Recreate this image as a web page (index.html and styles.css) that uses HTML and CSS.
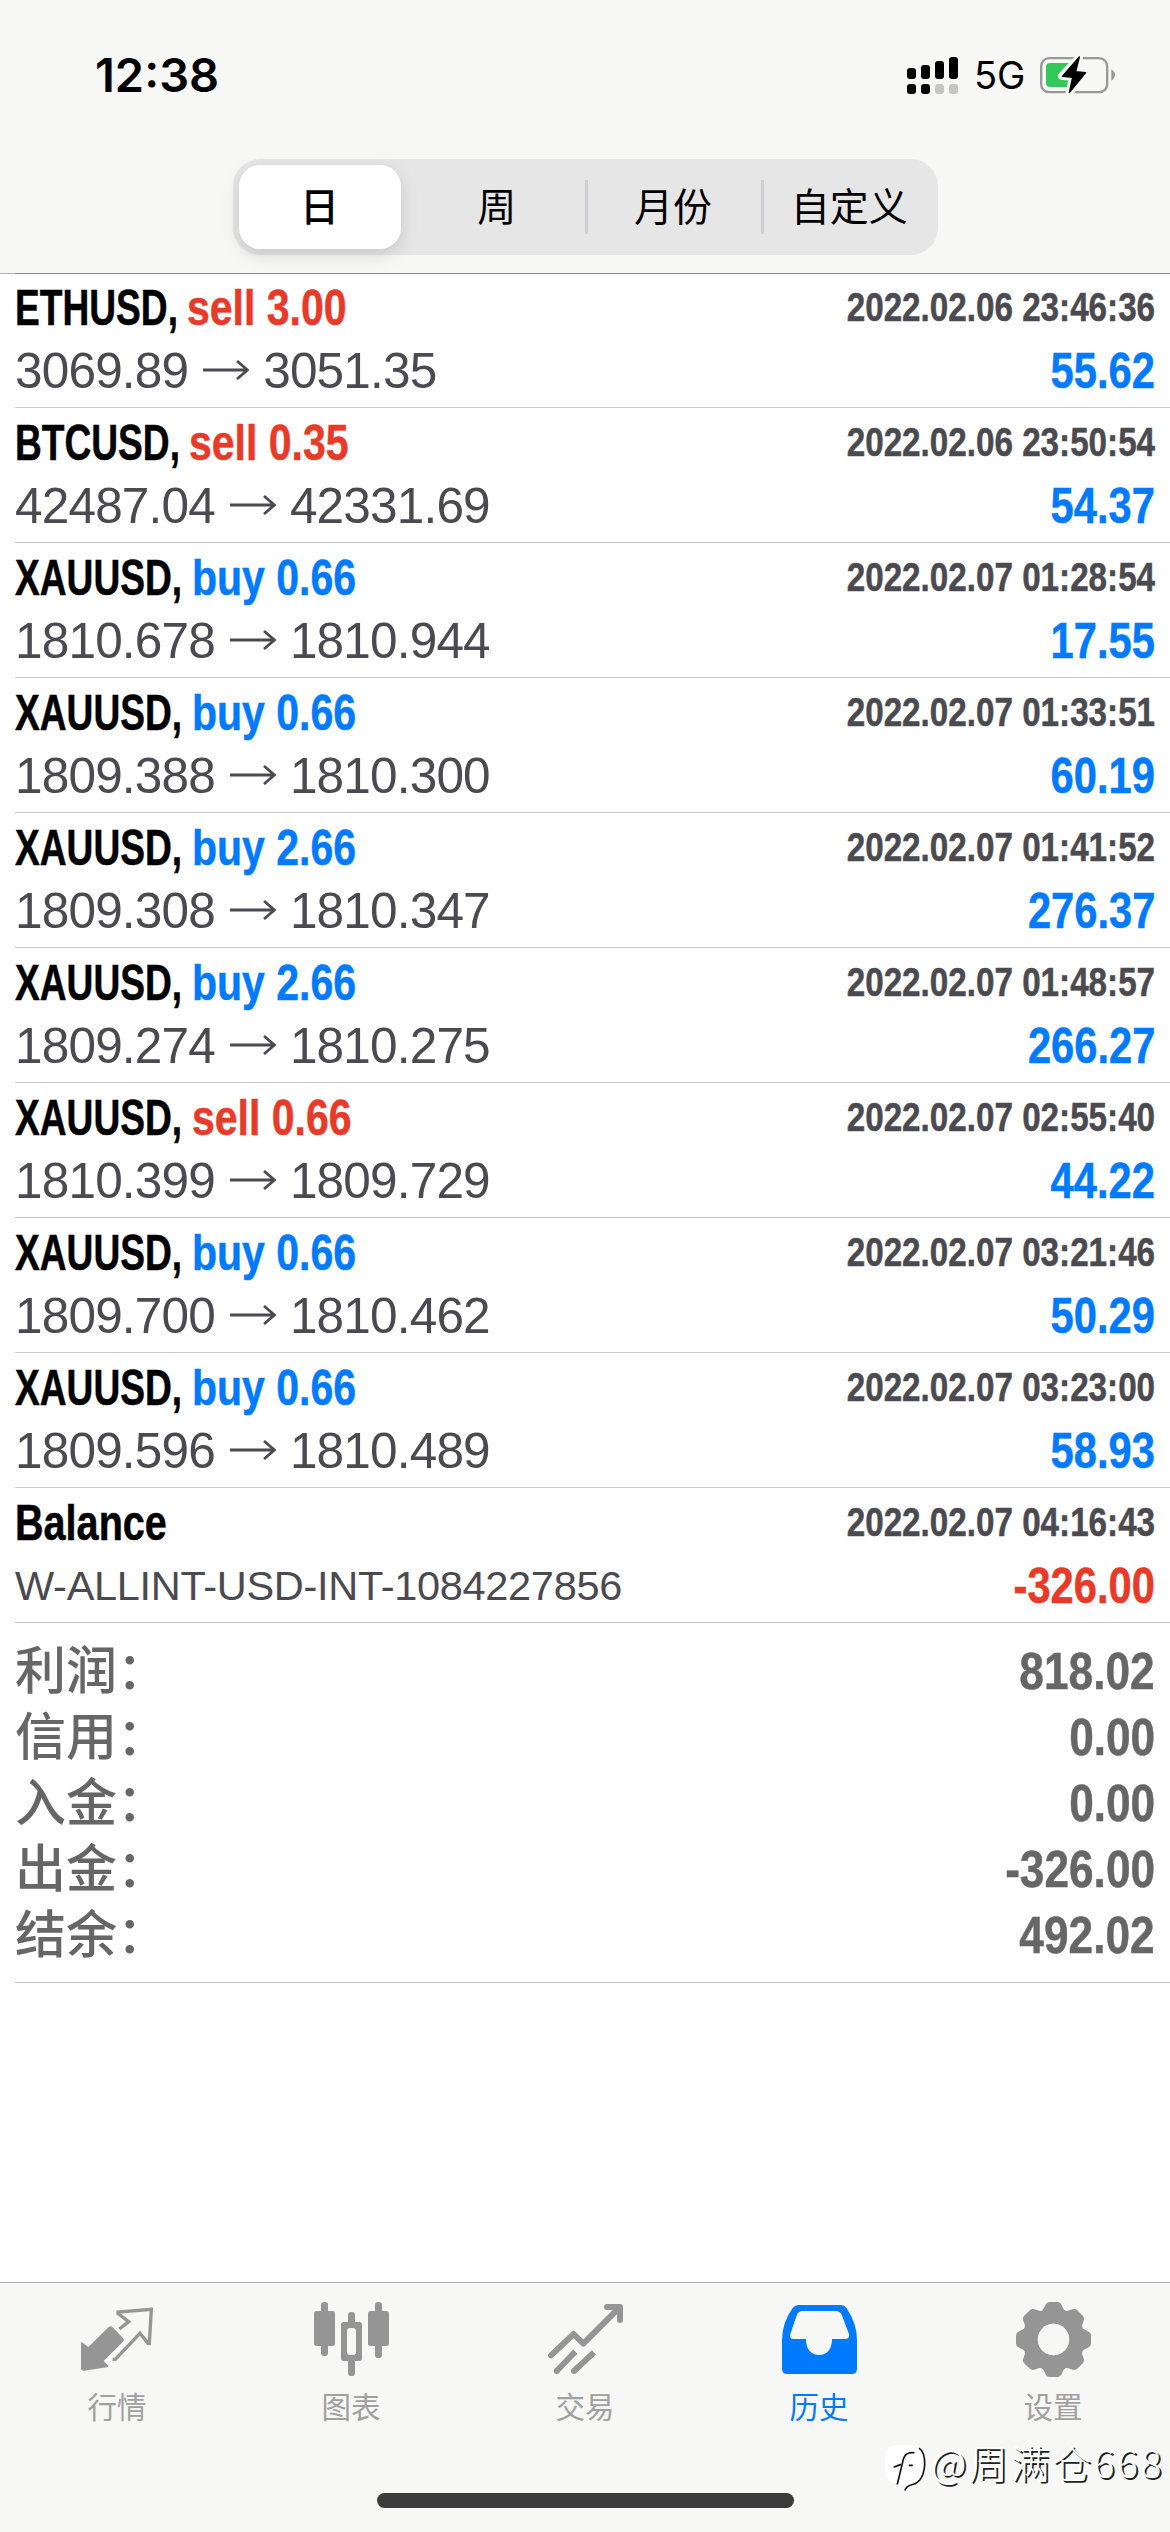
FILE: index.html
```html
<!DOCTYPE html>
<html lang="zh-CN">
<head>
<meta charset="utf-8">
<title>历史</title>
<link rel="stylesheet" href="styles.css">
</head>
<body>
<svg class="defs" width="0" height="0" aria-hidden="true">
  <symbol id="arrow" viewBox="0 0 46 22"><path d="M0 11H44M34 2L44.500 11L34 20" fill="none" stroke="currentColor" stroke-width="2.800"/></symbol>
</svg>
<header class="top">
  <div class="status">
    <span class="time">12:38</span>
    <div class="indicators">
      <svg class="signal" viewBox="0 0 51 37"><g fill="#000"><rect x="0" y="11" width="9" height="11" rx="3"/><rect x="14" y="8" width="9" height="14" rx="3"/><rect x="28" y="4" width="9" height="18" rx="3"/><rect x="42" y="0" width="9" height="22" rx="3"/><rect x="0" y="27" width="9" height="10" rx="3"/><rect x="14" y="27" width="9" height="10" rx="3"/></g><g fill="#c5c5c5"><rect x="28" y="27" width="9" height="10" rx="3"/><rect x="42" y="27" width="9" height="10" rx="3"/></g></svg>
      <span class="net">5G</span>
      <svg class="battery" viewBox="480 75 225 114"><rect x="483.500" y="81.500" width="198" height="102" rx="24" fill="none" stroke="#999" stroke-width="7"/><path d="M694 115Q705 122 705 131Q705 141 694 149Z" fill="#999"/><rect x="498" y="96" width="84" height="72" rx="12" fill="#34c759"/><path d="M598 78L545 135L578 139L568 186L618 125L587 122Z" fill="#f6f6f6" stroke="#f6f6f6" stroke-width="22" stroke-linejoin="round"/><path d="M598 78L547 136L578 139L568 185L617 125L587 122Z" fill="#000" stroke="#000" stroke-width="4" stroke-linejoin="round"/></svg>
    </div>
  </div>
  <div class="segments">
    <span class="segment on">日</span><span class="segment">周</span><span class="segment line">月份</span><span class="segment line">自定义</span>
  </div>
</header>
<main>
  <div class="deal eth"><div class="row"><span class="sym">ETHUSD,</span><span class="side sell">sell 3.00</span><span class="date">2022.02.06 23:46:36</span></div><div class="row"><span class="price">3069.89<svg class="arrow"><use href="#arrow"/></svg>3051.35</span><span class="profit">55.62</span></div></div>
  <div class="deal btc"><div class="row"><span class="sym">BTCUSD,</span><span class="side sell">sell 0.35</span><span class="date">2022.02.06 23:50:54</span></div><div class="row"><span class="price">42487.04<svg class="arrow"><use href="#arrow"/></svg>42331.69</span><span class="profit">54.37</span></div></div>
  <div class="deal"><div class="row"><span class="sym">XAUUSD,</span><span class="side">buy 0.66</span><span class="date">2022.02.07 01:28:54</span></div><div class="row"><span class="price">1810.678<svg class="arrow"><use href="#arrow"/></svg>1810.944</span><span class="profit">17.55</span></div></div>
  <div class="deal"><div class="row"><span class="sym">XAUUSD,</span><span class="side">buy 0.66</span><span class="date">2022.02.07 01:33:51</span></div><div class="row"><span class="price">1809.388<svg class="arrow"><use href="#arrow"/></svg>1810.300</span><span class="profit">60.19</span></div></div>
  <div class="deal"><div class="row"><span class="sym">XAUUSD,</span><span class="side">buy 2.66</span><span class="date">2022.02.07 01:41:52</span></div><div class="row"><span class="price">1809.308<svg class="arrow"><use href="#arrow"/></svg>1810.347</span><span class="profit">276.37</span></div></div>
  <div class="deal"><div class="row"><span class="sym">XAUUSD,</span><span class="side">buy 2.66</span><span class="date">2022.02.07 01:48:57</span></div><div class="row"><span class="price">1809.274<svg class="arrow"><use href="#arrow"/></svg>1810.275</span><span class="profit">266.27</span></div></div>
  <div class="deal"><div class="row"><span class="sym">XAUUSD,</span><span class="side sell">sell 0.66</span><span class="date">2022.02.07 02:55:40</span></div><div class="row"><span class="price">1810.399<svg class="arrow"><use href="#arrow"/></svg>1809.729</span><span class="profit">44.22</span></div></div>
  <div class="deal"><div class="row"><span class="sym">XAUUSD,</span><span class="side">buy 0.66</span><span class="date">2022.02.07 03:21:46</span></div><div class="row"><span class="price">1809.700<svg class="arrow"><use href="#arrow"/></svg>1810.462</span><span class="profit">50.29</span></div></div>
  <div class="deal"><div class="row"><span class="sym">XAUUSD,</span><span class="side">buy 0.66</span><span class="date">2022.02.07 03:23:00</span></div><div class="row"><span class="price">1809.596<svg class="arrow"><use href="#arrow"/></svg>1810.489</span><span class="profit">58.93</span></div></div>
  <div class="deal"><div class="row"><span class="balance">Balance</span><span class="date">2022.02.07 04:16:43</span></div><div class="row"><span class="comment">W-ALLINT-USD-INT-1084227856</span><span class="profit loss">-326.00</span></div></div>
  <div class="summary">
    <div class="total"><span>利润：</span><span class="sum">818.02</span></div>
    <div class="total"><span>信用：</span><span class="sum">0.00</span></div>
    <div class="total"><span>入金：</span><span class="sum">0.00</span></div>
    <div class="total"><span>出金：</span><span class="sum">-326.00</span></div>
    <div class="total"><span>结余：</span><span class="sum">492.02</span></div>
  </div>
</main>
<footer class="bottom">
  <nav class="tabs">
    <div class="tab"><svg class="icon" viewBox="87 96 225 225"><path d="M93 217L112 231L173 171Q178 166 184 171L216 204Q221 210 216 215L158 273L172 287Q173 291 168 292L99 302Q90 302 90 293V218Z" fill="currentColor"/><path d="M205 177L233 155L201 130V126L301 118L295 220H291L267 190L193 268H185" fill="none" stroke="currentColor" stroke-width="10"/></svg><span>行情</span></div>
    <div class="tab"><svg class="icon" viewBox="789 96 225 225"><g fill="currentColor"><rect x="810" y="96" width="21" height="162" rx="10"/><rect x="789" y="123" width="63" height="105" rx="8"/><rect x="891" y="126" width="21" height="45" rx="10"/><rect x="891" y="260" width="21" height="58" rx="10"/><path fill-rule="evenodd" d="M878 156H925Q933 156 933 164V265Q933 273 925 273H878Q870 273 870 265V164Q870 156 878 156ZM898 174Q888 174 888 184V245Q888 255 898 255H905Q915 255 915 245V184Q915 174 905 174Z"/><rect x="972" y="96" width="21" height="168" rx="10"/><rect x="951" y="123" width="63" height="105" rx="8"/></g></svg><span>图表</span></div>
    <div class="tab"><svg class="icon" viewBox="81 96 225 225"><g fill="none" stroke="currentColor" stroke-width="18" stroke-linejoin="round"><path d="M90 256L158 192L187 221L292 116" stroke-linecap="round"/><path d="M258 111H297V150" stroke-linecap="round"/><path d="M163 245L107 303M219 247L159 303"/></g><circle cx="107" cy="303" r="9" fill="currentColor"/><circle cx="159" cy="303" r="9" fill="currentColor"/></svg><span>交易</span></div>
    <div class="tab active"><svg class="icon" viewBox="783 96 225 225"><path fill="currentColor" fill-rule="evenodd" d="M832 105H960Q970 105 976 113Q1008 160 1008 210V296Q1008 312 992 312H799Q783 312 783 296V210Q783 158 815 114Q822 105 832 105ZM846 123Q833 123 828 134L808 192Q804 207 818 207H855C855 240 872 255 894 255C917 255 933 239 933 207H972Q987 207 984 193L962 134Q957 123 944 123Z"/></svg><span>历史</span></div>
    <div class="tab"><svg class="icon" viewBox="-112.500 -112.500 225 225"><defs><path id="tooth" d="M-38 -84Q-29 -90 -26 -100Q-21 -112.500 -12 -112.500H12Q21 -112.500 26 -100Q29 -90 38 -84L30 -50H-30Z"/></defs><g fill="currentColor"><use href="#tooth"/><use href="#tooth" transform="rotate(45)"/><use href="#tooth" transform="rotate(90)"/><use href="#tooth" transform="rotate(135)"/><use href="#tooth" transform="rotate(180)"/><use href="#tooth" transform="rotate(225)"/><use href="#tooth" transform="rotate(270)"/><use href="#tooth" transform="rotate(315)"/></g><circle r="66" fill="none" stroke="currentColor" stroke-width="38"/><circle r="47" fill="#f7f7f6"/></svg><span>设置</span></div>
  </nav>
  <div class="home"></div>
  <div class="mark"><svg class="logo" viewBox="42 525 130 150"><path d="M76 531H132Q168 538 165 585Q162 640 125 652L104 668L108 655L76 646Q46 640 46 610V570Q46 534 76 531Z" fill="#fff"/><path d="M148 540Q166 552 165 590Q161 642 128 650Q110 654 105 668M134 554Q104 549 99 580L82 650M71 598L93 589M117 592H129" fill="none" stroke="#111" stroke-width="5"/></svg><span>@周满仓668</span></div>
</footer>
</body>
</html>
```
FILE: styles.css
```css
* { box-sizing: border-box; }
body {
  margin: 0;
  width: 1170px;
  height: 2532px;
  display: flex;
  flex-direction: column;
  overflow: hidden;
  background: #fff;
  font-family: "Liberation Sans", "Noto Sans CJK SC", sans-serif;
}
.defs { position: absolute; }
.top {
  height: 274px;
  margin-bottom: -1px;
  z-index: 1;
  display: flex;
  flex-direction: column;
  align-items: center;
  background: linear-gradient(to right, #b2b2b2 15px, #8c8c90 15px) bottom / 100% 1px no-repeat, #f7f7f6;
}
.status {
  width: 100%;
  height: 159px;
  padding: 45px 55px 0 95px;
  display: flex;
  justify-content: space-between;
  align-items: flex-start;
  font-family: Inter, sans-serif;
}
.time { font-size: 47px; line-height: 60px; font-weight: 600; }
.indicators { display: flex; align-items: center; height: 60px; }
.signal { width: 51px; height: 37px; }
.net { width: 82px; padding-left: 16px; font-size: 38px; line-height: 60px; }
.battery { width: 75px; height: 38px; }
.segments {
  width: 705px;
  height: 96px;
  padding: 6px 0 6px 6px;
  display: grid;
  grid-template-columns: 170px 1fr 1fr 1fr;
  border-radius: 27px;
  background: #e6e6e6;
  font: 400 39px/79px "Noto Sans CJK SC", sans-serif;
  text-align: center;
}
.segment.on {
  margin-right: 8px;
  font-weight: 500;
  border-radius: 21px;
  background: #fff;
  box-shadow: 0 6px 18px rgba(0,0,0,.13);
}
.segment.line { background: linear-gradient(#cfcfd1, #cfcfd1) left center / 3px 54px no-repeat; }
.deal {
  height: 135px;
  margin-left: 15px;
  padding: 3px 15px 0 0;
  border-bottom: 1px solid #c7c7c9;
}
.row { height: 63px; display: flex; align-items: baseline; white-space: nowrap; }
.sym, .side, .balance, .date, .profit, .sum {
  font-weight: 700;
  transform-origin: left;
  -webkit-text-stroke: .5px currentColor;
}
.sym, .side, .balance { font-size: 49.5px; line-height: 63px; }
.sym { width: 177px; transform: scaleX(.75); }
.eth .sym { width: 172px; }
.btc .sym { width: 174px; }
.side { transform: scaleX(.828); color: #007aff; }
.balance { transform: scaleX(.8); }
.sell { color: #e83a29; }
.date, .profit, .sum { margin-left: auto; transform-origin: right; }
.date { font-size: 40.5px; transform: scaleX(.82) translateY(-4px); color: #4b4a50; }
.price { font-size: 49.5px; line-height: 63px; letter-spacing: -.82px; color: #4b4a50; }
.arrow { width: 46px; height: 22px; margin: 0 14px 0 15px; vertical-align: 7px; }
.profit { font-size: 49.5px; line-height: 63px; transform: scaleX(.842); color: #007aff; }
.profit.loss { color: #e83a29; }
.comment { font-size: 41.5px; letter-spacing: -.3px; transform: translateY(-3px); color: #4b4a50; }
.summary {
  height: 360px;
  margin-left: 15px;
  padding: 11px 15px 0 0;
  border-bottom: 1px solid #c7c7c9;
  color: #666;
}
.total { height: 66px; display: flex; align-items: baseline; font: 500 51px/66px "Noto Sans CJK SC", sans-serif; }
.sum { font: 700 52.5px/66px "Liberation Sans", sans-serif; transform: scaleX(.842); }
.bottom {
  position: relative;
  height: 250px;
  margin-top: auto;
  padding-top: 19px;
  display: flex;
  flex-direction: column;
  align-items: center;
  border-top: 1px solid #b0b0b0;
  background: #f7f7f6;
}
.tabs { width: 100%; display: grid; grid-template-columns: repeat(5, 1fr); }
.tab {
  display: flex;
  flex-direction: column;
  align-items: center;
  color: #959595;
  font: 400 29.500px/44px "Noto Sans CJK SC", sans-serif;
}
.tab span { margin-top: 6px; color: #a0a0a0; }
.icon { width: 75px; height: 75px; }
.tab.active, .tab.active span { color: #007aff; }
.home { width: 417px; height: 15px; margin-top: auto; margin-bottom: 24px; border-radius: 8px; background: #3b3b3b; }
.mark {
  position: absolute;
  right: 6px;
  bottom: 39px;
  display: flex;
  align-items: center;
  font: 300 39px/60px "Noto Sans CJK SC", sans-serif;
  letter-spacing: 2.6px;
  color: #fff;
  text-shadow: 2px 2px 0 #222;
}
.logo { width: 43px; height: 50px; margin: 14px 4px 0 0; }
```
